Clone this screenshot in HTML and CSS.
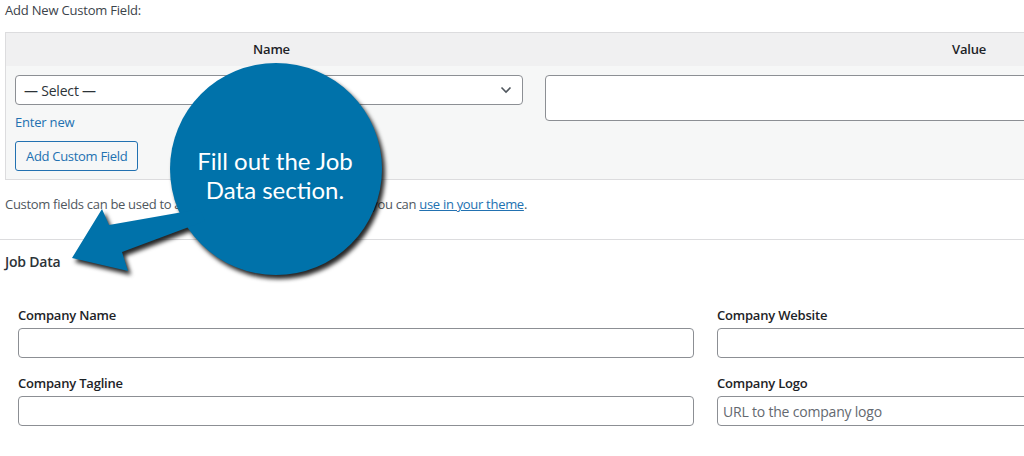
FILE: index.html
```html
<!DOCTYPE html>
<html lang="en">
<head>
<meta charset="utf-8">
<title>Job Data</title>
<link rel="stylesheet" href="styles.css">
</head>
<body>
<div class="page">
  <div class="meta">
    <p class="title">Add New Custom Field:</p>
    <div class="cf-table">
      <div class="th th-name">Name</div>
      <div class="th th-value">Value</div>
      <div class="td td-name">
        <div class="select">
          <span>— Select —</span>
          <svg class="chev" width="12" height="8" viewBox="0 0 12 8"><path d="M1.5 1.5 L6 6 L10.5 1.5" fill="none" stroke="#50575e" stroke-width="1.6"/></svg>
        </div>
        <a class="enter-new" href="#">Enter new</a>
        <button class="btn" type="button">Add Custom Field</button>
      </div>
      <div class="td td-value"><div class="textarea"></div></div>
    </div>
    <p class="desc">Custom fields can be used to add extra metadata to a post that you can <a href="#">use in your theme</a>.</p>
  </div>
  <div class="divider"></div>
  <section class="job">
    <h2 class="job-title">Job Data</h2>
    <div class="fields">
      <div class="field"><label class="label">Company Name</label><div class="input"></div></div>
      <div class="field"><label class="label">Company Website</label><div class="input"></div></div>
      <div class="field"><label class="label">Company Tagline</label><div class="input"></div></div>
      <div class="field"><label class="label">Company Logo</label><div class="input"><span class="placeholder">URL to the company logo</span></div></div>
    </div>
  </section>
</div>
<svg class="callout" width="1024" height="456" viewBox="0 0 1024 456">
  <g class="bubble">
    <circle cx="276" cy="169" r="106" fill="#0072aa"/>
    <polygon points="72,258 102,209 109,225 200,209 205,221 122,252 128,271" fill="#0072aa"/>
  </g>
  <text class="callout-text" x="275" y="170" text-anchor="middle">Fill out the Job</text>
  <text class="callout-text" x="275" y="199" text-anchor="middle">Data section.</text>
</svg>
</body>
</html>
```
FILE: styles.css
```css
html, body {
  margin: 0;
  padding: 0;
  overflow: hidden;
  background: #fff;
}
body {
  width: 1024px;
  height: 456px;
  position: relative;
  font-family: "Open Sans", "Noto Sans", sans-serif;
  font-size: 13px;
  letter-spacing: -0.2px;
  color: #3c434a;
}
.page {
  width: 1500px;
}
.meta {
  padding-left: 5px;
}
.title {
  margin: 0;
  line-height: 20px;
  color: #3c434a;
}
.cf-table {
  margin-top: 12px;
  width: 1395px;
  display: grid;
  grid-template-columns: 531px 864px;
  border: 1px solid #dcdcde;
}
.th {
  height: 33px;
  line-height: 33px;
  background: #f0f0f1;
  text-align: center;
  font-weight: 600;
  color: #1d2327;
}
.td {
  background: #f6f7f7;
  padding-top: 9px;
}
.td-name {
  padding: 9px 15px 8px 9px;
  display: flex;
  flex-direction: column;
  align-items: flex-start;
}
.select {
  box-sizing: border-box;
  width: 508px;
  height: 30px;
  border: 1px solid #8c8f94;
  border-radius: 4px;
  background: #fff;
  display: flex;
  align-items: center;
  justify-content: space-between;
  padding: 0 10px 0 8px;
  font-size: 14px;
  color: #2c3338;
}
.chev {
  display: block;
}
.enter-new {
  margin-top: 8px;
  line-height: 18px;
  color: #2271b1;
  text-decoration: none;
}
.btn {
  margin-top: 10px;
  height: 30px;
  box-sizing: border-box;
  padding: 0 10px;
  border: 1px solid #2271b1;
  border-radius: 3px;
  background: #f6f7f7;
  color: #2271b1;
  font-family: inherit;
  font-size: 13px;
  letter-spacing: -0.3px;
}
.td-value {
  padding-left: 8px;
}
.textarea {
  box-sizing: border-box;
  width: 840px;
  height: 46px;
  border: 1px solid #8c8f94;
  border-radius: 4px;
  background: #fff;
}
.desc {
  margin: 15px 0 0;
  line-height: 18px;
  letter-spacing: -0.3px;
  color: #50575e;
}
.desc a {
  color: #2271b1;
}
.divider {
  margin-top: 26px;
  border-top: 1px solid #dcdcde;
}
.job {
  padding-left: 5px;
}
.job-title {
  margin: 13px 0 0;
  font-size: 14px;
  line-height: 18px;
  font-weight: 600;
  color: #2c3338;
}
.fields {
  margin-top: 35px;
  padding-left: 13px;
  display: grid;
  grid-template-columns: 676px 676px;
  column-gap: 23px;
  row-gap: 16px;
}
.field {
  display: flex;
  flex-direction: column;
}
.label {
  line-height: 18px;
  font-weight: 600;
  color: #1d2327;
}
.input {
  margin-top: 4px;
  box-sizing: border-box;
  height: 30px;
  border: 1px solid #8c8f94;
  border-radius: 4px;
  background: #fff;
  display: flex;
  align-items: center;
  padding: 0 5px;
}
.placeholder {
  font-size: 14px;
  color: #646970;
}
.callout {
  position: absolute;
  left: 0;
  top: 0;
  pointer-events: none;
}
.bubble {
  filter: drop-shadow(3px 4px 2px rgba(0, 0, 0, 0.85));
}
.callout-text {
  font-family: Lato, "Open Sans", sans-serif;
  font-size: 24px;
  letter-spacing: 0;
  fill: #fff;
}
```
